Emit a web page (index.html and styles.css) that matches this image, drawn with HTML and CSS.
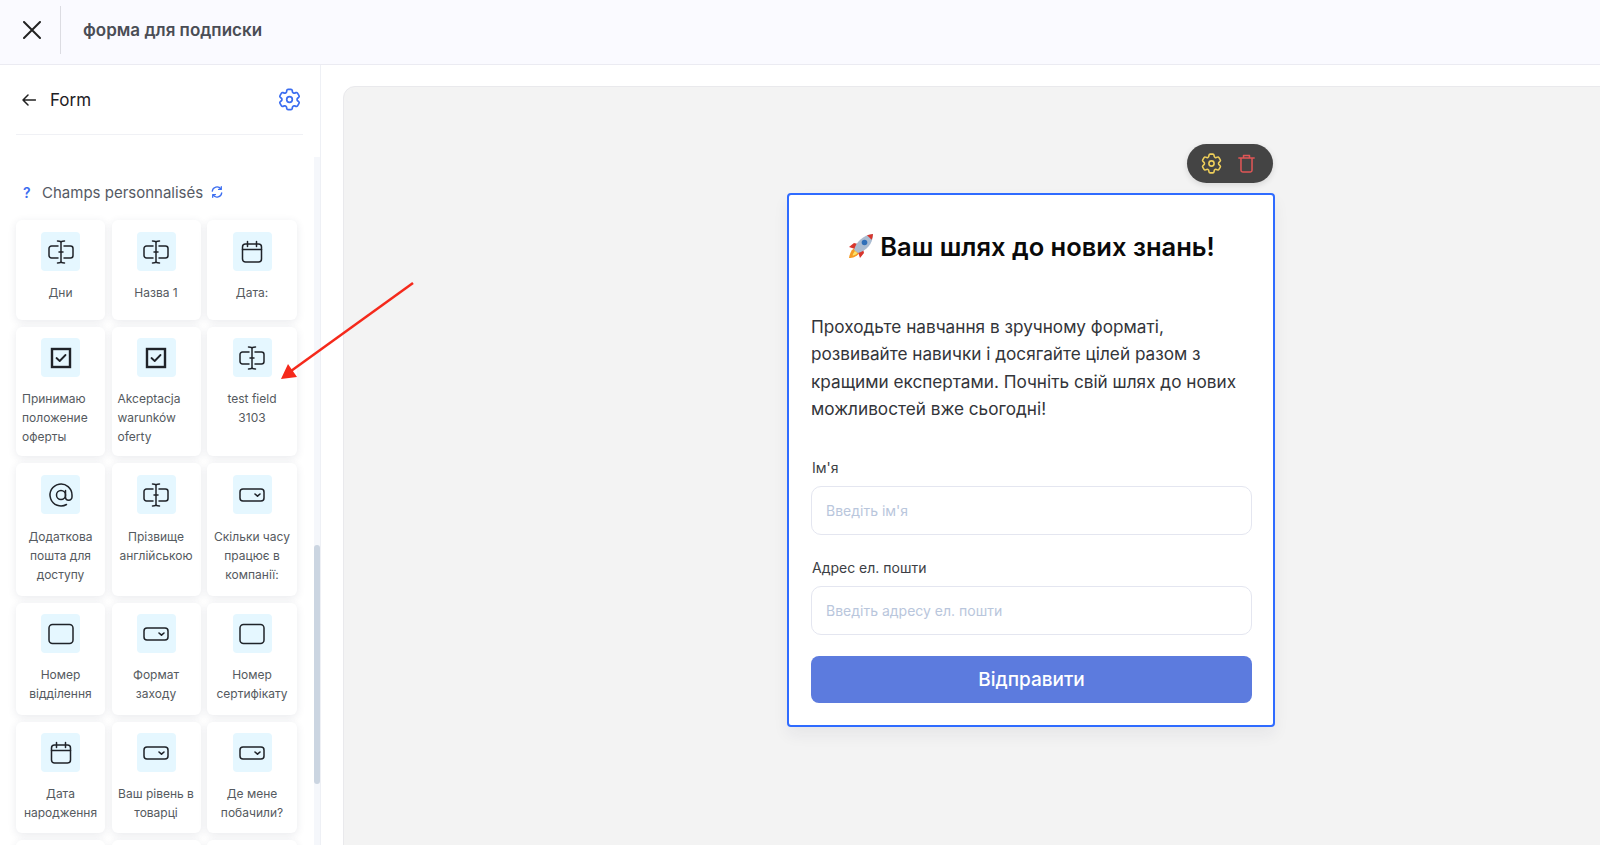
FILE: index.html
```html
<!DOCTYPE html>
<html lang="uk">
<head>
<meta charset="utf-8">
<title>форма для подписки</title>
<link rel="stylesheet" href="styles.css">
</head>
<body>
<svg class="defs" width="0" height="0" aria-hidden="true">
  <symbol id="i-text" viewBox="0 0 26 26">
    <path d="M10 7H3.500A2.500 2.500 0 0 0 1 9.500v7A2.500 2.500 0 0 0 3.500 19H10M16 7h6.500A2.500 2.500 0 0 1 25 9.500v7a2.500 2.500 0 0 1-2.500 2.500H16"/>
    <path d="M13 3.500v19M11 13h4M9.500 2c2 0 3.500.4 3.500 1.500C13 2.400 14.500 2 16.500 2M9.500 24c2 0 3.500-.4 3.500-1.500 0 1.100 1.500 1.500 3.500 1.500"/>
  </symbol>
  <symbol id="i-date" viewBox="0 0 26 26">
    <rect x="3.500" y="5" width="19" height="18" rx="3"/>
    <path d="M3.500 10.500h19M8.500 2.500v5M17.500 2.500v5"/>
  </symbol>
  <symbol id="i-check" viewBox="0 0 26 26">
    <rect x="4" y="4" width="18" height="18" stroke-width="2.400" stroke-linejoin="miter"/>
    <path d="M8.500 13l3.200 3 5.800-6" stroke-width="1.800"/>
  </symbol>
  <symbol id="i-at" viewBox="0 0 26 26">
    <circle cx="13" cy="13" r="4.500"/>
    <path d="M17.500 8.500v6.500a3.200 3.200 0 0 0 6.500 0v-2A11 11 0 1 0 18.500 22.500"/>
  </symbol>
  <symbol id="i-select" viewBox="0 0 26 26">
    <rect x="1" y="7" width="24" height="12" rx="3"/>
    <path d="M16 12l2.500 2.200 2.500-2.200" stroke-width="1.600"/>
  </symbol>
  <symbol id="i-box" viewBox="0 0 26 26">
    <rect x="1" y="3.500" width="24" height="19" rx="3.500"/>
  </symbol>
  <symbol id="i-gear" viewBox="0 0 24 24">
    <path d="M9.594 3.940c.09-.542.56-.94 1.110-.94h2.593c.55 0 1.020.398 1.110.94l.213 1.281c.063.374.313.686.645.870.074.04.147.083.22.127.325.196.72.257 1.075.124l1.217-.456a1.125 1.125 0 011.370.49l1.296 2.247a1.125 1.125 0 01-.26 1.431l-1.003.827c-.293.241-.438.613-.43.992a7.723 7.723 0 010 .255c-.008.378.137.75.43.991l1.004.827c.424.35.534.955.26 1.430l-1.298 2.247a1.125 1.125 0 01-1.369.491l-1.217-.456c-.355-.133-.75-.072-1.076.124a6.570 6.570 0 01-.22.128c-.331.183-.581.495-.644.869l-.213 1.280c-.09.543-.56.941-1.110.941h-2.594c-.55 0-1.020-.398-1.110-.94l-.213-1.281c-.062-.374-.312-.686-.644-.87a6.520 6.520 0 01-.22-.127c-.325-.196-.72-.257-1.076-.124l-1.217.456a1.125 1.125 0 01-1.369-.49l-1.297-2.247a1.125 1.125 0 01.26-1.431l1.004-.827c.292-.24.437-.613.43-.992a6.932 6.932 0 010-.255c.007-.378-.138-.75-.43-.991l-1.004-.827a1.125 1.125 0 01-.26-1.430l1.297-2.247a1.125 1.125 0 011.370-.491l1.216.456c.356.133.751.072 1.076-.124.072-.044.146-.087.22-.128.332-.183.582-.495.644-.869l.214-1.281z"/>
    <circle cx="12" cy="12" r="2.500"/>
  </symbol>
</svg>

<div class="app">
  <header class="topbar">
    <button class="close" type="button" aria-label="close">
      <svg class="close-icon" viewBox="0 0 18 18"><path d="M1 1l16 16M17 1L1 17"/></svg>
    </button>
    <h1 class="doc-title">форма для подписки</h1>
  </header>

  <div class="workspace">
    <aside class="sidebar">
      <div class="side-head">
        <svg class="back-icon" viewBox="0 0 14 12"><path d="M13.500 6H1M6 1L1 6l5 5"/></svg>
        <span class="side-title">Form</span>
        <svg class="side-gear"><use href="#i-gear"/></svg>
      </div>
      <div class="side-body">
        <div class="side-list">
          <div class="section-title">
            <span class="help">?</span>
            <span>Champs personnalisés</span>
            <svg class="refresh" viewBox="0 0 14 14"><path d="M1.500 6A5.500 5.500 0 0 1 11.500 3.500M12.500 8A5.500 5.500 0 0 1 2.500 10.500M12 .8v3.200H8.800M2 13.200V10h3.200"/></svg>
          </div>
          <div class="field-grid">
            <div class="field row-first"><div class="ico"><svg><use href="#i-text"/></svg></div><p>Дни</p></div>
            <div class="field row-first"><div class="ico"><svg><use href="#i-text"/></svg></div><p>Назва 1</p></div>
            <div class="field row-first"><div class="ico"><svg><use href="#i-date"/></svg></div><p>Дата:</p></div>

            <div class="field"><div class="ico"><svg><use href="#i-check"/></svg></div><p class="left">Принимаю положение оферты</p></div>
            <div class="field"><div class="ico"><svg><use href="#i-check"/></svg></div><p class="left">Akceptacja warunków oferty</p></div>
            <div class="field"><div class="ico"><svg><use href="#i-text"/></svg></div><p>test field<br>3103</p></div>

            <div class="field row-third"><div class="ico"><svg><use href="#i-at"/></svg></div><p>Додаткова пошта для доступу</p></div>
            <div class="field row-third"><div class="ico"><svg><use href="#i-text"/></svg></div><p>Прізвище англійською</p></div>
            <div class="field row-third"><div class="ico"><svg><use href="#i-select"/></svg></div><p>Скільки часу працює в компанії:</p></div>

            <div class="field"><div class="ico"><svg><use href="#i-box"/></svg></div><p>Номер<br>відділення</p></div>
            <div class="field"><div class="ico"><svg><use href="#i-select"/></svg></div><p>Формат<br>заходу</p></div>
            <div class="field"><div class="ico"><svg><use href="#i-box"/></svg></div><p>Номер<br>сертифікату</p></div>

            <div class="field"><div class="ico"><svg><use href="#i-date"/></svg></div><p>Дата<br>народження</p></div>
            <div class="field"><div class="ico"><svg><use href="#i-select"/></svg></div><p>Ваш рівень в<br>товарці</p></div>
            <div class="field"><div class="ico"><svg><use href="#i-select"/></svg></div><p>Де мене<br>побачили?</p></div>

            <div class="field"></div>
            <div class="field"></div>
            <div class="field"></div>
          </div>
        </div>
        <div class="scroll-track"><div class="scroll-thumb"></div></div>
      </div>
    </aside>

    <main class="stage">
      <div class="canvas">
        <div class="form-card">
          <div class="toolbar">
            <svg class="tool-gear"><use href="#i-gear"/></svg>
            <svg class="tool-trash" viewBox="0 0 20 22"><path d="M1 4.500h18M6.500 4.500V1.500h7v3M3.500 4.500V19a2 2 0 0 0 2 2h9a2 2 0 0 0 2-2V4.500"/></svg>
          </div>
          <h2 class="form-title">
            <svg class="rocket" viewBox="0 0 26 26">
              <path class="flame" d="M7 15c-3 1-5 4-6 10 4 0 9-2 10-5z"/>
              <path class="flame-in" d="M7 18c-1 1-2 3-2.500 4.500 2 0 4-1 5-2.500z"/>
              <path class="fin" d="M6 10L1 14l6 2 3-5zM16 20l-4 5-2-6 5-3z"/>
              <path class="body" d="M6 17C8 9 15 2 25 1c0 10-7 17-15 19z"/>
              <path class="nose" d="M19 2.200C21 1.500 23 1.200 25 1c-.2 2-.6 4-1.300 5.800z"/>
              <circle class="port" cx="16.500" cy="9.500" r="2.800"/>
            </svg>
            <span>Ваш шлях до нових знань!</span>
          </h2>
          <p class="form-text">Проходьте навчання в зручному форматі, розвивайте навички і досягайте цілей разом з кращими експертами. Почніть свій шлях до нових можливостей вже сьогодні!</p>
          <label class="form-label first">Ім'я</label>
          <input class="form-input" type="text" placeholder="Введіть ім'я">
          <label class="form-label second">Адрес ел. пошти</label>
          <input class="form-input" type="text" placeholder="Введіть адресу ел. пошти">
          <button class="submit" type="button">Відправити</button>
        </div>
      </div>
    </main>
  </div>

  <svg class="annotation" viewBox="0 0 1600 845" aria-hidden="true">
    <path class="arrow-line" d="M413 283L291 371"/>
    <path class="arrow-head" d="M281 379l7-15 9 13z"/>
  </svg>
</div>
</body>
</html>
```

FILE: styles.css
```css
* { box-sizing: border-box; }
html, body { margin: 0; height: 100%; overflow: hidden; background: #fff; }
body { font-family: Inter, "Noto Sans", sans-serif; color: #222; }
.defs { position: absolute; }
symbol { fill: none; stroke: currentColor; stroke-width: 1.5; stroke-linecap: round; stroke-linejoin: round; }

.app { position: relative; height: 845px; display: flex; flex-direction: column; }

.topbar { height: 65px; flex: none; display: flex; align-items: center; background: #fafaff; border-bottom: 1px solid #ebebf2; }
.close { width: 61px; height: 48px; margin-top: -4px; padding: 0 0 0 3px; background: none; border: 0; border-right: 1px solid #dcdce2; display: flex; align-items: center; justify-content: center; }
.close-icon { width: 18px; height: 18px; fill: none; stroke: #222; stroke-width: 2; stroke-linecap: round; }
.doc-title { margin: -5px 0 0 22px; font-size: 17px; font-weight: 600; color: #4a4d55; }

.workspace { flex: 1; display: flex; min-height: 0; }

.sidebar { width: 321px; flex: none; border-right: 1px solid #eef0f5; display: flex; flex-direction: column; min-height: 0; }
.side-head { height: 70px; margin: 0 17px 0 16px; padding: 0 0 0 6px; flex: none; display: flex; align-items: center; border-bottom: 1px solid #f0f1f5; }
.back-icon { width: 14px; height: 12px; fill: none; stroke: #222; stroke-width: 1.500; stroke-linecap: round; stroke-linejoin: round; }
.side-title { margin-left: 14px; font-size: 17px; font-weight: 400; color: #1f2125; flex: 1; }
.side-gear { width: 27px; height: 27px; color: #3b6df0; }

.side-body { flex: 1; display: flex; min-height: 0; overflow: hidden; }
.side-list { flex: 1; padding: 47px 17px 0 16px; min-width: 0; }
.section-title { display: flex; align-items: center; height: 20px; font-size: 15px; color: #555a64; }
.help { width: 26px; padding-left: 7px; color: #3b6df0; font-weight: 600; font-size: 14px; }
.refresh { width: 12px; height: 12px; margin-left: 8px; fill: none; stroke: #3b6df0; stroke-width: 1.500; stroke-linecap: round; stroke-linejoin: round; }

.field-grid { margin-top: 18px; display: grid; grid-template-columns: 89px 89px 90px; grid-template-rows: 100px 129px 133px 112px 111px 112px; column-gap: 6.5px; row-gap: 7px; width: 281px; }
.field { padding: 11px 6px 0; background: #fff; border-radius: 6px; box-shadow: 0 2px 8px rgba(40, 50, 80, .10); }
.row-first { padding-top: 12px; }
.row-third { padding-top: 12px; }
.row-third p { padding-top: 1px; }
.ico { width: 39px; height: 39px; margin: 0 auto; background: #e5f7ff; border-radius: 4px; color: #1f2329; display: flex; align-items: center; justify-content: center; }
.ico svg { width: 26px; height: 26px; }
.field p { margin: 12px 0 0; font-size: 12px; line-height: 19px; text-align: center; color: #555a60; }
.field p.left { text-align: left; }

.scroll-track { width: 6px; margin-top: 22px; flex: none; background: #f5f7fb; }
.scroll-thumb { width: 6px; height: 239px; margin-top: 388px; background: #cbd5e1; border-radius: 3px; }

.stage { flex: 1; min-width: 0; padding: 21px 0 0 22px; overflow: hidden; }
.canvas { height: 900px; margin-right: -40px; padding: 106px 0 0 443px; background: #f3f3f3; border: 1px solid #e9e9ec; border-radius: 12px; }

.form-card { position: relative; width: 488px; height: 534px; padding: 32px 21px 0 22px; background: #fff; border: 2px solid #2f6bff; border-radius: 4px; box-shadow: 0 8px 16px rgba(30, 40, 70, .06); }
.toolbar { position: absolute; top: -51px; right: 0; width: 86px; height: 39px; padding: 0 18px 0 12px; display: flex; align-items: center; justify-content: space-between; background: #444; border-radius: 20px; box-shadow: 0 2px 6px rgba(0, 0, 0, .12); }
.tool-gear { width: 25px; height: 25px; color: #efcf5a; }
.tool-trash { width: 17px; height: 19px; fill: none; stroke: #e05656; stroke-width: 1.800; stroke-linecap: round; stroke-linejoin: round; }

.form-title { margin: 0; height: 38px; display: flex; align-items: center; justify-content: center; gap: 6px; font-size: 25.500px; font-weight: 600; color: #0a0a0a; }
.rocket { width: 26px; height: 26px; }
.flame { fill: #f59b24; }
.flame-in { fill: #fbe36a; }
.fin { fill: #d8352c; }
.body { fill: #a9bbd0; }
.nose { fill: #d8352c; }
.port { fill: #2f6fb8; }

.form-text { margin: 48px 0 0; font-size: 17.200px; line-height: 27.300px; color: #33353a; }
.form-label { display: block; margin: 24px 0 9px 1px; font-size: 14px; line-height: 18px; color: #3c3e44; }
.form-label.first { margin: 37px 0 9px 1px; }
.form-input { display: block; width: 100%; height: 49px; padding: 0 14px; font: 14px Inter, sans-serif; background: #fff; border: 1px solid #e4e6f0; border-radius: 10px; outline: 0; }
.form-input::placeholder { color: #b9c6dc; opacity: 1; }
.submit { display: block; width: 100%; height: 47px; margin-top: 21px; background: #5c7bde; color: #fff; font: 500 19px Inter, sans-serif; border: 0; border-radius: 8px; }

.annotation { position: absolute; inset: 0; width: 1600px; height: 845px; pointer-events: none; }
.arrow-line { fill: none; stroke: #f5291b; stroke-width: 2.500; }
.arrow-head { fill: #f5291b; }
```
